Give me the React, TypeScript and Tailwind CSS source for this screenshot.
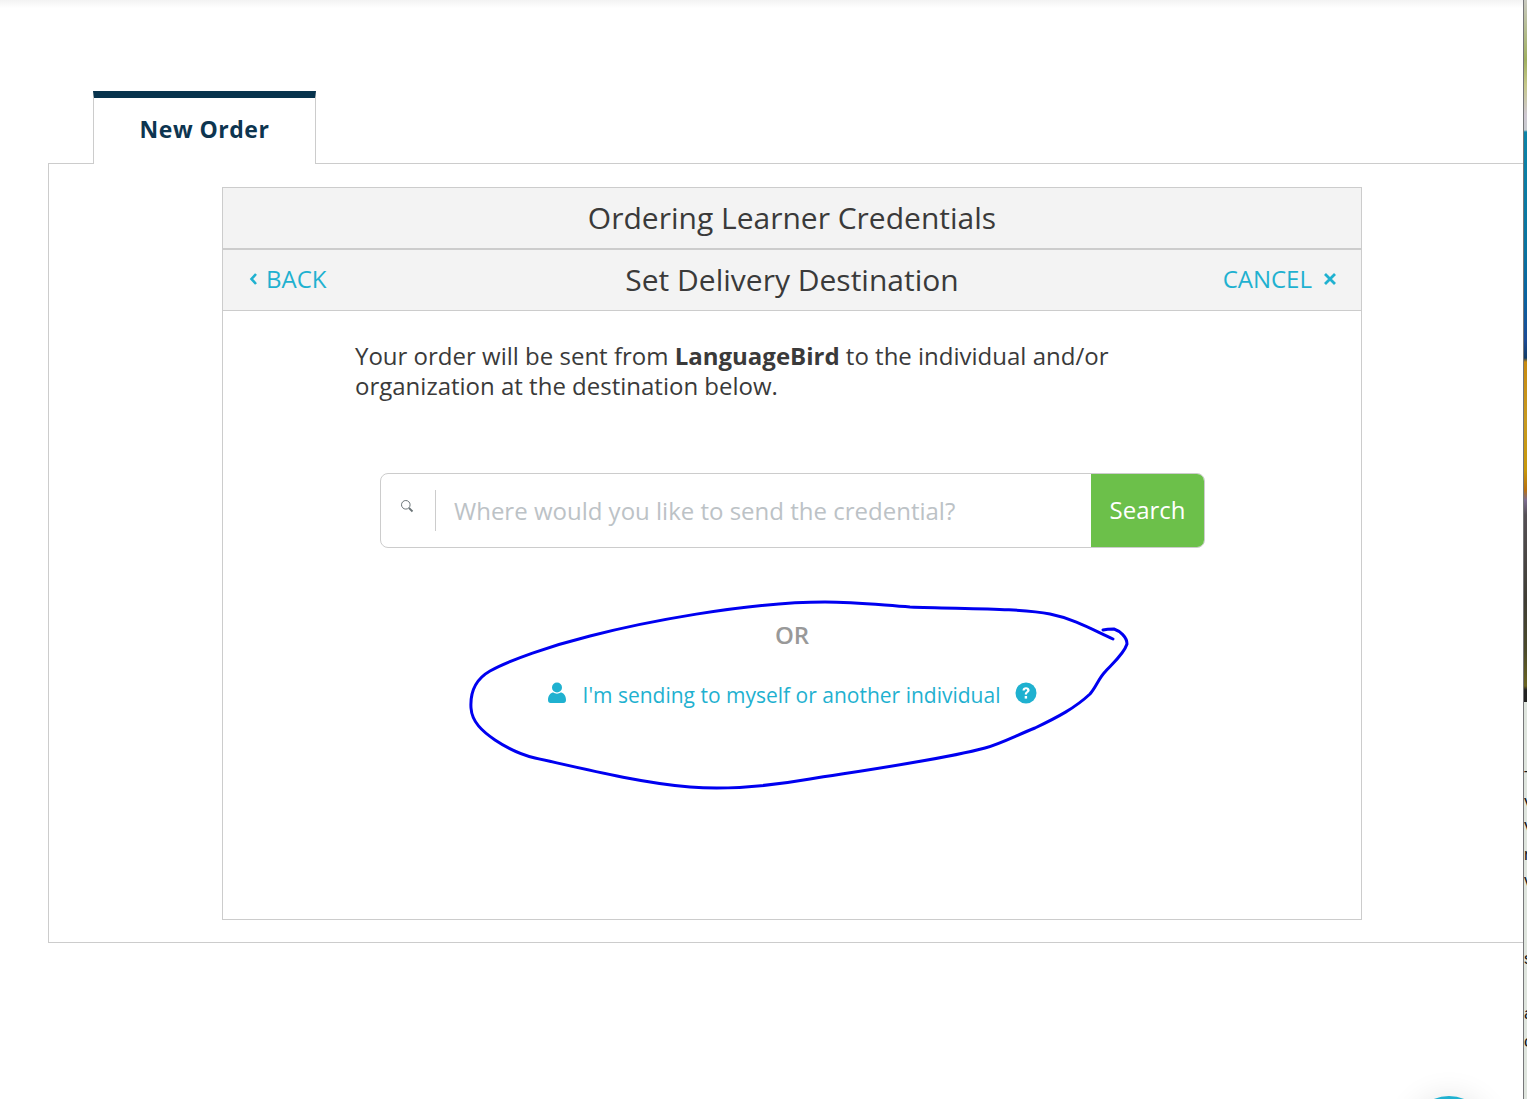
const stripGlyphs = [
  { char: "T", offset: "mt-[70px]" },
  { char: "V", offset: "mt-[15px]" },
  { char: "V", offset: "mt-[12px]" },
  { char: "r", offset: "mt-[14px]" },
  { char: "v", offset: "mt-[14px]" },
  { char: "s", offset: "mt-[66px]" },
  { char: "a", offset: "mt-[43px]" },
  { char: "c", offset: "mt-[16px]" },
];

function SideStrip() {
  return (
    <div className="flex w-1 shrink-0 flex-col overflow-hidden border-l border-[#77777a] bg-[#dfe5de]">
      <div className="h-[702px] shrink-0 bg-[linear-gradient(180deg,#c9c9c0_0px,#a0b060_60px,#c6c88a_85px,#cfc8d2_115px,#c8ccd0_130px,#0c84a8_132px,#0a74a0_250px,#0a62a0_300px,#1c4a96_340px,#123c68_358px,#c88a10_362px,#c89a20_420px,#c8980a_470px,#b8700f_490px,#7d6d8f_500px,#555055_515px,#3f3d34_600px,#4a4a2a_650px,#6a6420_686px,#222222_690px,#222222_702px)]" />
      {stripGlyphs.map((glyph, i) => (
        <div
          key={i}
          className={`${glyph.offset} h-3 font-['Liberation_Sans',sans-serif] text-[17px] leading-3 text-[#1a1a1a]`}
        >
          {glyph.char}
        </div>
      ))}
    </div>
  );
}

function Scribble() {
  return (
    <svg className="pointer-events-none absolute left-0 top-0" width="1527" height="1099" fill="none">
      <path
        d="M1113 639 C1095 631 1075 619 1050 614 C1020 608 960 609 910 607 C880 605 855 602 825 602 C745 602 640 623 590 636 C550 646 510 660 490 671 C476 679 470 692 471 708 C472 722 482 731 495 740 C510 750 522 755 535 758 C580 768 640 783 690 787 C730 790 770 786 810 779 C860 771 940 760 985 748 C1000 744 1015 736 1035 728 C1058 717 1075 708 1090 694 C1096 687 1098 680 1104 673 C1112 664 1124 654 1127 644 C1127 637 1120 631 1114 629 C1110 629 1107 629 1103 630"
        stroke="#0000f0"
        strokeWidth="3"
        strokeLinecap="round"
      />
    </svg>
  );
}

export default function App() {
  return (
    <div className="relative flex h-[1099px] w-[1527px] overflow-hidden bg-white font-['Open_Sans',sans-serif] text-[#3a3a3a]">
      <div className="min-w-0 flex-1 pl-12 pt-[91px]">
        <div className="relative z-10 ml-[45px] h-[73px] w-[223px] border-x border-[#cccccc] border-t-[7px] border-t-[#07334d] bg-white pt-4 text-center text-[23px] font-bold leading-[30px] tracking-[0.5px] text-[#0d3550]">
          New Order
        </div>
        <div className="-mt-px h-[780px] border-y border-l border-[#cccccc] pl-[173px] pt-[23px]">
          <div className="h-[733px] w-[1140px] border border-[#cccccc]">
            <div className="h-[62px] border-b-2 border-[#cccccc] bg-[#f3f3f3] text-center text-[30px] leading-[60px]">
              Ordering Learner Credentials
            </div>
            <div className="flex h-[61px] items-center justify-between border-b border-[#cccccc] bg-[#f3f3f3] pb-[2px] pl-[26px] pr-6">
              <a className="flex w-[180px] items-center gap-2 text-[24px] text-[#1fb1d0]">
                <svg width="9" height="14" viewBox="0 0 9 14" fill="none">
                  <path d="M7 2 L2.5 7 L7 12" stroke="currentColor" strokeWidth="2.6" />
                </svg>
                BACK
              </a>
              <div className="-ml-[2px] text-[30px]">Set Delivery Destination</div>
              <a className="flex w-[180px] items-center justify-end gap-[11px] text-[24px] text-[#1fb1d0]">
                CANCEL
                <svg width="14" height="14" viewBox="0 0 14 14" fill="none">
                  <path d="M2 2 L12 12 M12 2 L2 12" stroke="currentColor" strokeWidth="2.8" />
                </svg>
              </a>
            </div>
            <p className="ml-[132px] mt-[30px] w-[800px] text-[24px] leading-[30px]">
              Your order will be sent from <b className="font-bold">LanguageBird</b> to the individual and/or
              <br />
              organization at the destination below.
            </p>
            <div className="ml-[157px] mt-[72px] flex h-[75px] w-[825px] overflow-hidden rounded-lg border border-[#cccccc]">
              <div className="flex w-[54px] shrink-0 items-center justify-center pb-[10px] pr-[3px]">
                <svg width="14" height="14" viewBox="0 0 14 14" fill="none" stroke="#6b7477">
                  <circle cx="5.8" cy="5.8" r="4.3" strokeWidth="1" />
                  <path d="M9 9 L12.5 12.5" strokeWidth="1.8" />
                </svg>
              </div>
              <div className="my-4 w-px bg-[#cccccc]" />
              <div className="flex-1 pl-[18px] text-[24px] leading-[73px] text-[#bcc2c6]">
                Where would you like to send the credential?
              </div>
              <div className="flex w-[113px] shrink-0 items-center justify-center bg-[#6cc04a] pb-[2px] text-[24px] text-white">
                Search
              </div>
            </div>
            <div className="mt-[72px] text-center text-[24px] font-semibold leading-[30px] text-[#999999]">OR</div>
            <div className="mt-[30px] flex items-center justify-center text-[21px] leading-[30px] text-[#1fb1d0]">
              <svg className="mb-1" width="20" height="22" viewBox="0 0 20 22" fill="currentColor">
                <circle cx="10" cy="5.5" r="5" />
                <path d="M1 18 C1 13 4 10.5 6.5 10.5 C8 12 12 12 13.5 10.5 C16 10.5 19 13 19 18 C19 20 18 21 16.5 21 H3.5 C2 21 1 20 1 18 Z" />
              </svg>
              <span className="ml-4">I'm sending to myself or another individual</span>
              <svg className="mb-1 ml-[15px]" width="22" height="22" viewBox="0 0 22 22">
                <circle cx="11" cy="11" r="10.5" fill="currentColor" />
                <path d="M7.5 8.5 C7.5 6.2 9 5.2 11 5.2 C13 5.2 14.6 6.4 14.6 8.2 C14.6 10.4 12 10.4 12 12.6 H9.8 C9.8 9.6 12.2 9.6 12.2 8.3 C12.2 7.6 11.7 7.2 11 7.2 C10.2 7.2 9.7 7.8 9.7 8.5 Z" fill="white" />
                <rect x="9.7" y="14" width="2.4" height="2.6" fill="white" />
              </svg>
            </div>
          </div>
        </div>
      </div>
      <SideStrip />
      <div className="absolute left-0 top-0 h-2 w-[1523px] bg-gradient-to-b from-[#f3f3f3] to-white" />
      <div className="absolute left-[1409px] top-[1096px] h-20 w-20 rounded-full bg-[#1fb1d0] shadow-[0_0_30px_rgba(0,0,0,0.1)]" />
      <Scribble />
    </div>
  );
}
